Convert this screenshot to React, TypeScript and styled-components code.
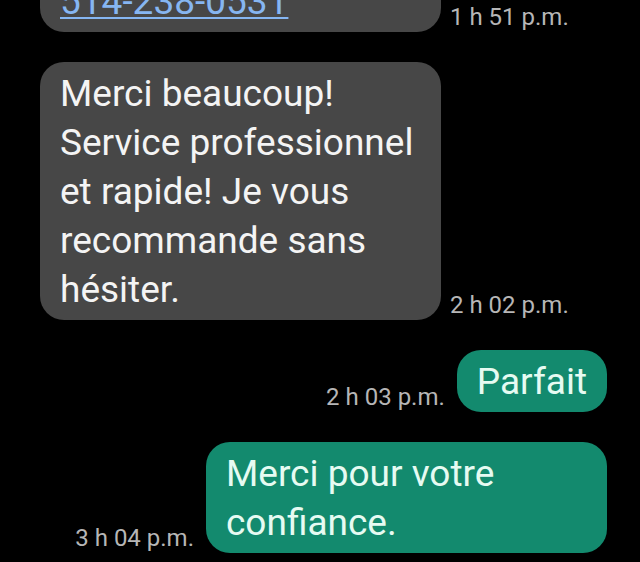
import React from 'react';
import styled, { createGlobalStyle } from 'styled-components';

const GlobalStyle = createGlobalStyle`
    html, body {
        margin: 0;
        padding: 0;
        background: #000;
    }
    body {
        font-family: Roboto, "Noto Sans", "DejaVu Sans", sans-serif;
        -webkit-font-smoothing: antialiased;
    }
`;

const Thread = styled.div`
    display: flex;
    flex-direction: column;
    justify-content: flex-end;
    gap: 30px;
    height: 562px;
    overflow: hidden;
    padding: 0 33px 9px 40px;
    box-sizing: border-box;
    background: #000;
`;

const Row = styled.div<{ $out?: boolean }>`
    display: flex;
    align-items: flex-end;
    justify-content: ${props => (props.$out ? 'flex-end' : 'flex-start')};
    gap: ${props => (props.$out ? '12px' : '9px')};
`;

const Bubble = styled.div<{ $out?: boolean }>`
    max-width: 401px;
    box-sizing: border-box;
    padding: 7px 20px 6px;
    border-radius: 24px;
    font-size: 37px;
    line-height: 49px;
    background: ${props => (props.$out ? '#138a6e' : '#474747')};
    color: ${props => (props.$out ? '#e6fbf2' : '#f4f4f4')};
`;

const Time = styled.span`
    flex: 0 0 auto;
    padding-bottom: 1px;
    font-size: 24px;
    line-height: 28px;
    color: #b6b6b6;
    white-space: nowrap;
`;

const PhoneLink = styled.a`
    color: #86b6f2;
    white-space: nowrap;
    text-decoration: underline;
    text-decoration-thickness: 2px;
    text-underline-offset: 3px;
`;

const messages = [
    {
        out: false,
        time: '2 h 02 p.m.',
        text: 'Merci beaucoup! Service professionnel et rapide! Je vous recommande sans hésiter.',
    },
    { out: true, time: '2 h 03 p.m.', text: 'Parfait' },
    { out: true, time: '3 h 04 p.m.', text: 'Merci pour votre confiance.' },
];

const App = () => (
    <>
        <GlobalStyle />
        <Thread>
            <Row>
                <Bubble>
                    Pour toute question, n’hésitez pas à m’appeler au
                    <br />
                    <PhoneLink href="tel:5142380531">514-238-0531</PhoneLink>
                </Bubble>
                <Time>1 h 51 p.m.</Time>
            </Row>
            {messages.map(msg => (
                <Row key={msg.time} $out={msg.out}>
                    {msg.out && <Time>{msg.time}</Time>}
                    <Bubble $out={msg.out}>{msg.text}</Bubble>
                    {!msg.out && <Time>{msg.time}</Time>}
                </Row>
            ))}
        </Thread>
    </>
);

export default App;
